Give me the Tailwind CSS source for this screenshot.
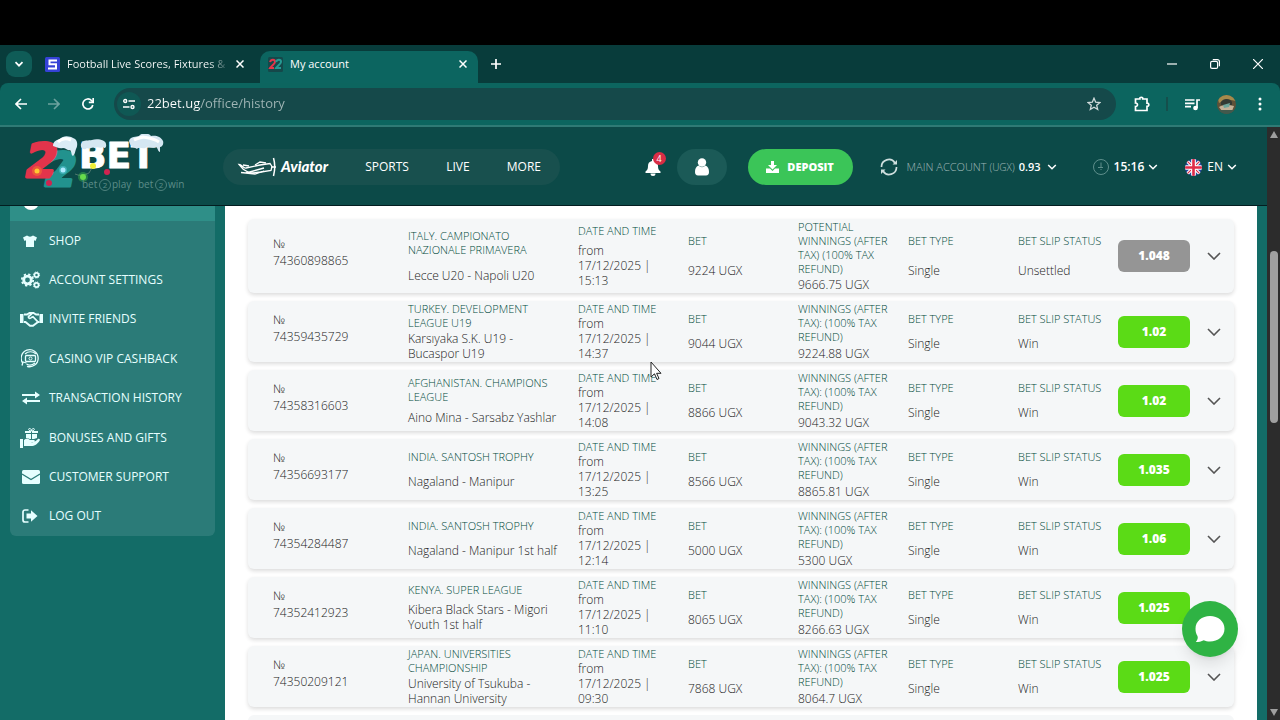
<!DOCTYPE html>
<html lang="en">
<head>
  <meta charset="UTF-8">
  <meta name="viewport" content="width=device-width, initial-scale=1.0">
  <title>My account</title>
  <script src="https://cdn.jsdelivr.net/npm/@tailwindcss/browser@4"></script>
</head>
<body class="h-screen overflow-hidden flex flex-col bg-black font-['Open_Sans','Noto_Sans',sans-serif] text-white">

  <!-- tab strip -->
  <div class="mt-[45px] h-[38px] shrink-0 bg-[#083c3b] flex items-end">
    <button aria-label="Search tabs" class="ml-1.5 mb-1.5 size-[26px] rounded-[9px] bg-[#0f5c57] flex items-center justify-center">
      <svg class="size-2.5" viewBox="0 0 10 10" fill="none" stroke="currentColor" stroke-width="1.7"><path d="M1.5 3.2 5 6.7l3.500-3.500"/></svg>
    </button>
    <div class="h-8 w-[228px] pl-[13px] pr-[16px] pb-1.5 flex items-center text-[11px] font-medium">
      <svg class="size-[15px] shrink-0" viewBox="0 0 15 15"><rect width="15" height="15" rx="1.500" fill="#3542d6"/><path d="M12 3.500H4.500v3.800H11v4.200H3" fill="none" stroke="#fff" stroke-width="2"/></svg>
      <span class="ml-[7px] whitespace-nowrap bg-linear-to-r from-white from-90% to-white/20 bg-clip-text text-transparent">Football Live Scores, Fixtures &amp;</span>
      <button aria-label="Close tab" class="ml-auto"><svg class="size-2" viewBox="0 0 8 8" stroke="currentColor" stroke-width="1.500"><path d="m.5.5 7 7m0-7-7 7"/></svg></button>
    </div>
    <div class="h-8 w-[218px] pl-2 pr-[11px] pb-1.5 rounded-t-[10px] bg-[#0c6560] flex items-center text-[11px] font-medium">
      <svg class="size-[15px] shrink-0" viewBox="0 0 15 15"><rect width="15" height="15" rx="1.500" fill="#15484a"/><path d="M2 5c1-3 5-3 5 0 0 2-4 4-5 6h4" fill="none" stroke="#e5354a" stroke-width="2"/><path d="M8 5c1-3 5-3 5 0 0 2-4 4-5 6h5" fill="none" stroke="#269a93" stroke-width="2"/></svg>
      <span class="ml-[7px]">My account</span>
      <button aria-label="Close tab" class="ml-auto"><svg class="size-2" viewBox="0 0 8 8" stroke="currentColor" stroke-width="1.500"><path d="m.5.5 7 7m0-7-7 7"/></svg></button>
    </div>
    <button aria-label="New tab" class="ml-[13px] mb-[14px]"><svg class="size-2.5" viewBox="0 0 10 10" stroke="currentColor" stroke-width="1.700"><path d="M5 0v10M0 5h10"/></svg></button>
    <div class="ml-auto mr-[17px] mb-3.5 flex items-center gap-[33px]">
      <button aria-label="Minimize"><svg class="size-2.5" viewBox="0 0 10 10" stroke="currentColor" stroke-width="1.200"><path d="M0 5h10"/></svg></button>
      <button aria-label="Restore"><svg class="size-2.5" viewBox="0 0 10 10" fill="none" stroke="currentColor" stroke-width="1.200"><rect x=".6" y="2.400" width="7" height="7" rx="1.500"/><path d="M2.800.6h4.600a2 2 0 0 1 2 2v4.600"/></svg></button>
      <button aria-label="Close"><svg class="size-2.5" viewBox="0 0 10 10" stroke="currentColor" stroke-width="1.200"><path d="m0 0 10 10M10 0 0 10"/></svg></button>
    </div>
  </div>

  <!-- toolbar -->
  <div class="shrink-0 bg-[#083c3b]">
    <div class="h-11 bg-[#0c655f] border-b-2 border-[#2f7a75] rounded-t-lg flex items-center pl-[15px] pr-[18px]">
      <button aria-label="Back"><svg class="size-3" viewBox="0 0 12 12" fill="none" stroke="currentColor" stroke-width="1.600"><path d="M12 6H1.200M6 1 1 6l5 5"/></svg></button>
      <button aria-label="Forward" class="ml-[21px] text-white/40"><svg class="size-3" viewBox="0 0 12 12" fill="none" stroke="currentColor" stroke-width="1.600"><path d="M0 6h10.800M6 1l5 5-5 5"/></svg></button>
      <button aria-label="Reload" class="ml-[22px]"><svg class="size-3" viewBox="0 0 12 12" fill="none" stroke="currentColor" stroke-width="1.700"><path d="M10.800 7A5 5 0 1 1 9.500 2.500L11 4"/><path d="M11.200 0v4.400H6.800"/></svg></button>
      <div class="ml-5 h-8 flex-1 rounded-full bg-[#15494a] flex items-center pl-[3px] pr-[15px]">
        <button aria-label="Site information" class="size-6 rounded-full bg-[#0f5854] flex items-center justify-center">
          <svg class="size-3" viewBox="0 0 12 12" fill="none" stroke="currentColor" stroke-width="1.400"><circle cx="2.200" cy="3" r="1.500"/><path d="M5.500 3H12M0 9h6.500"/><circle cx="9.500" cy="9" r="1.500"/></svg>
        </button>
        <input aria-label="Address" value="22bet.ug/office/history" class="ml-1.5 flex-1 min-w-0 text-[13px] text-transparent bg-clip-text bg-linear-to-r from-white from-[53px] to-white/60 to-[53px]">
        <button aria-label="Bookmark" class="text-white/80"><svg class="size-3.5" viewBox="0 0 14 14" fill="none" stroke="currentColor" stroke-width="1.300"><path d="m7 1.200 1.700 4 4.300.3-3.300 2.800 1 4.200L7 10.300l-3.700 2.200 1-4.200L1 5.500l4.300-.3z"/></svg></button>
      </div>
      <button aria-label="Extensions" class="ml-[18px]"><svg class="size-4" viewBox="0 0 16 16" fill="none" stroke="currentColor" stroke-width="1.700"><path d="M1.500 3h4.300c-.4-2.300 3.400-2.300 3 0h4.200v4.200c2.400-.2 2.400 3.300 0 3.100v4.200h-11.500v-4c2.600.1 2.600-3.700 0-3.500z"/></svg></button>
      <span class="ml-4 h-3.5 w-0.5 bg-[#154f4c]"></span>
      <button aria-label="Media" class="ml-[17px]"><svg class="size-[15px]" viewBox="0 0 15 15" fill="none" stroke="currentColor" stroke-width="1.700"><path d="M0 3h9.500M0 6.300h9.500M0 9.600h6"/><path d="M12 11V3h3"/><circle cx="10.500" cy="11" r="1.500" fill="currentColor"/></svg></button>
      <button aria-label="Profile" class="ml-[17px]"><svg class="size-[19px] rounded-full" viewBox="0 0 19 19"><rect width="19" height="19" fill="#5f5138"/><path d="M0 0h19v6L9 4 2 8z" fill="#a58a4c"/><path d="M4 7c2-4 9-4 11 0v3H4z" fill="#343a33"/><path d="M2 12c5-3 10-2 15-1l-2 5c-4 2-7 2-10 0z" fill="#c4b298"/><path d="m6 10 7-2-1 4-5 1z" fill="#6fa69b"/><path d="M2 15h14v4H2z" fill="#42594d"/></svg></button>
      <button aria-label="Menu" class="ml-[22px]"><svg class="w-1 h-3.5" viewBox="0 0 4 14" fill="currentColor"><circle cx="2" cy="2" r="1.500"/><circle cx="2" cy="7" r="1.500"/><circle cx="2" cy="12" r="1.500"/></svg></button>
    </div>
  </div>

  <div class="flex-1 min-h-0 flex">
    <div class="flex-1 min-w-0 flex flex-col bg-[#136c67]">

      <!-- site header -->
      <header class="h-[79px] shrink-0 bg-[#0c4a48] border-b border-[#031d20] flex items-center pt-0.5 pl-[25px] pr-[30px] text-xs">
        <a href="#" aria-label="22bet" class="shrink-0">
          <svg class="w-[165px] h-[66px]" viewBox="0 0 165 66" font-family="Open Sans, sans-serif">
            <g font-family="DejaVu Sans, sans-serif" font-weight="bold" stroke-linejoin="round">
              <text x="20" y="52" font-size="46" font-style="italic" fill="#22928e" stroke="#22928e" stroke-width="3">2</text>
              <text x="1" y="43" font-size="46" font-style="italic" fill="#e2344b" stroke="#e2344b" stroke-width="3">2</text>
              <text x="54" y="34" font-size="36" fill="#fff" stroke="#fff" stroke-width="1">BET</text>
            </g>
            <path d="M20 51 40 24l9-3v8L29 53z" fill="#22928e"/>
            <path d="M28 12c0-5 4-6 7-7 3-4 10-3 13-1 5 1 5 8 3 11-1 3-1 5-3 7-2-1-1-4-3-6-3 1-4-2-7-2-4 1-6-1-10-2z" fill="#dcecf6"/>
            <path d="M33 8c3-3 8-4 13-2" fill="none" stroke="#fff" stroke-width="3"/>
            <path d="M56 10c2-5 8-3 11-4 5-2 14 0 14 4 1 4-2 5-3 3-3 2-5-1-8 1-3-2-5 2-8 0-3 3-7 0-6-4z" fill="#d5e7f2"/>
            <path d="M104 7c1-5 8-4 10-5 3-4 10-3 12 0 4-1 10 0 12 5 1 3-1 6-3 6v5c-2 0-2-4-4-5-4 2-6-1-9 0-4 3-7-1-10 2-3-2-7-2-8-8z" fill="#d5e7f2"/>
            <path d="M109 6c4-2 6-2 9-3 5 1 10 1 16 5" fill="none" stroke="#fff" stroke-width="3"/>
            <path d="M50 40q6 3 14-1l4-7" fill="none" stroke="#4d796e" stroke-width="1"/>
            <g fill-opacity=".35"><circle cx="12" cy="37" r="5" fill="#ff9c1f"/><circle cx="38" cy="36" r="4" fill="#76e4ff"/><circle cx="58" cy="43" r="5" fill="#51dd47"/></g>
            <circle cx="12" cy="37" r="2.500" fill="#ffc832"/><circle cx="24" cy="49" r="3" fill="#cf2450"/><circle cx="38" cy="36" r="2.500" fill="#aeeaff"/><circle cx="58" cy="43" r="3" fill="#67dc4c"/><circle cx="68" cy="32" r="3" fill="#f0ef37"/><circle cx="82" cy="38" r="3" fill="#cf2450"/>
            <g font-size="10" fill="#5d8d89"><text x="57" y="54">bet</text><text x="87" y="54">play</text><text x="113" y="54">bet</text><text x="143" y="54">win</text></g>
            <g fill="none" stroke="#4f827e"><circle cx="80" cy="51" r="5.500"/><circle cx="136" cy="51" r="5.500"/></g>
            <g font-size="8" fill="#5d8d89" text-anchor="middle"><text x="80" y="54">2</text><text x="136" y="54">2</text></g>
          </svg>
        </a>
        <nav class="ml-[33px] h-9 w-[337px] rounded-full bg-[#18504e] flex items-center pl-3.5 pr-[19px] justify-between">
          <a href="#" class="flex items-center">
            <svg class="w-10 h-5" viewBox="0 0 40 20" fill="none" stroke="#fff" stroke-width="1.300"><path d="M2 7.500c3 0 4 4 7 3.500l14-3 10-1.500 2 3-1 4-10 1.500-9 1c-4 0-6-2-9-4z"/><path d="m9 16 18-5M4 15.500l14 1.500 9-3M12 9l-6-1M18 8l5-3 6 1"/><path d="M36.500 1c1.500 5 1.500 12 0 18M34 10h5" stroke-width="1.500"/></svg>
            <span class="ml-1 font-['Lato',sans-serif] font-black italic text-[15px]">Aviator</span>
          </a>
          <a href="#">SPORTS</a>
          <a href="#">LIVE</a>
          <a href="#">MORE</a>
        </nav>
        <div class="ml-auto flex items-center">
          <button aria-label="Notifications" class="relative">
            <svg class="w-4 h-[18px]" viewBox="0 0 16 18" fill="#fff"><path d="M7 1h2v2c3 .5 4 2.500 4 5 0 3 .8 4.200 2.500 5.500V15H.5v-1.500C2.200 12.200 3 11 3 8c0-2.500 1-4.500 4-5zM5.500 15.500h5a2.500 2.500 0 0 1-5 0z"/></svg>
            <span class="absolute left-2 -top-1.5 size-[13px] rounded-full bg-[#d92d45] text-[9px] leading-[13px] text-center">4</span>
          </button>
          <button aria-label="Profile" class="ml-4 w-[50px] h-9 rounded-full bg-[#1b5a57] flex items-center justify-center">
            <svg class="w-3.5 h-[18px]" viewBox="0 0 14 18" fill="#fff"><circle cx="7" cy="4.500" r="4.200"/><path d="M3.500 7.500Q7 11 10.500 7.500C13 8.500 14 11 14 14c0 2-1 3.500-3 3.500H3c-2 0-3-1.500-3-3.500 0-3 1-5.500 3.500-6.500z"/></svg>
          </button>
          <button class="ml-[21px] w-[105px] h-9 rounded-full bg-[#3bc558] flex items-center justify-center gap-2 text-[11px] font-extrabold">
            <svg class="w-[13px] h-3" viewBox="0 0 13 12" fill="#fff"><path d="M5 0h3v4h3L6.500 8.500 2 4h3zM0 7.500h4L6.500 10 9 7.500h4V12H0z"/></svg>
            DEPOSIT
          </button>
          <button aria-label="Refresh balance" class="ml-[27px]"><svg class="size-[18px]" viewBox="0 0 18 18" fill="none" stroke="#cfdfde" stroke-width="1.700"><path d="M1.500 9a7.300 7.300 0 0 1 13.500-4M16.500 9A7.300 7.300 0 0 1 3 13"/><path d="M17 2v4.500h-4.500zM1 16v-4.500h4.500z" fill="#cfdfde" stroke="none"/></svg></button>
          <button class="ml-[9px] flex items-center text-[11px]">
            <span class="font-light text-white/60">MAIN ACCOUNT <span class="text-[10px]">(UGX)</span></span>
            <span class="ml-1 font-semibold">0.93</span>
            <svg class="ml-1.5 size-2.5" viewBox="0 0 10 10" fill="none" stroke="#fff" stroke-width="1.500"><path d="M1.200 3 5 6.800 8.800 3"/></svg>
          </button>
          <button class="ml-9 flex items-center">
            <svg class="size-4" viewBox="0 0 16 16" fill="none" stroke="#5f8f8c"><circle cx="8" cy="8" r="7.500"/><path d="M8 3.500v5M5 8.500h5M8 10v1"/></svg>
            <span class="ml-[5px] font-semibold">15:16</span>
            <svg class="ml-1 size-2.5" viewBox="0 0 10 10" fill="none" stroke="#fff" stroke-width="1.500"><path d="M1.200 3 5 6.800 8.800 3"/></svg>
          </button>
          <button class="ml-[27px] flex items-center">
            <svg class="size-[17px] rounded-full" viewBox="0 0 18 18"><rect width="18" height="18" fill="#26479b"/><path d="m0 0 18 18M18 0 0 18" stroke="#fff" stroke-width="3.500"/><path d="m0 0 18 18M18 0 0 18" stroke="#df2b48" stroke-width="1.200"/><path d="M9 0v18M0 9h18" stroke="#fff" stroke-width="5"/><path d="M9 0v18M0 9h18" stroke="#df2b48" stroke-width="2.800"/></svg>
            <span class="ml-[5px]">EN</span>
            <svg class="ml-1 size-2.5" viewBox="0 0 10 10" fill="none" stroke="#fff" stroke-width="1.500"><path d="M1.200 3 5 6.800 8.800 3"/></svg>
          </button>
        </div>
      </header>

      <div class="flex-1 min-h-0 overflow-hidden flex pl-2.5 pr-2.5">
        <aside class="w-[205px] shrink-0">
          <a href="#" aria-label="Bet history" class="h-[39px] -mt-6 bg-[#2f8f88] flex items-center pl-[13px]"><svg class="size-4" viewBox="0 0 16 16"><circle cx="8" cy="8" r="8" fill="#fff"/></svg></a>
          <ul class="h-[315px] rounded-b-md bg-[#2b7b78] flex flex-col text-xs text-[#e6ffff]">
            <li class="flex-1 flex"><a href="#" class="w-full flex items-center">
              <svg class="ml-[11px] w-[18px] h-3.5 mr-2.5" viewBox="0 0 18 14" fill="currentColor"><path d="M6 1.500c1.500 1.500 4.500 1.500 6 0l4 2L14.500 7 13 6.300V13H5V6.300L3.500 7 2 3.500z"/></svg>SHOP</a></li>
            <li class="flex-1 flex"><a href="#" class="w-full flex items-center">
              <svg class="ml-[11px] w-5 h-[18px] mr-2" viewBox="0 0 20 18" fill="none" stroke="currentColor"><circle cx="6.500" cy="9" r="3.800" stroke-width="2.800"/><circle cx="6.500" cy="9" r="5.700" stroke-width="1.800" stroke-dasharray="2.240 2.240"/><circle cx="15.500" cy="4" r="2.100" stroke-width="1.700"/><circle cx="15.500" cy="4" r="3.100" stroke-width="1" stroke-dasharray="1.220 1.220"/><circle cx="15.500" cy="14" r="2.100" stroke-width="1.700"/><circle cx="15.500" cy="14" r="3.100" stroke-width="1" stroke-dasharray="1.220 1.220"/></svg>ACCOUNT SETTINGS</a></li>
            <li class="flex-1 flex"><a href="#" class="w-full flex items-center">
              <svg class="ml-2.5 w-[23px] h-4 mr-1.5" viewBox="0 0 23 16" fill="none" stroke="currentColor"><path d="M0 3h3.500v9H0zM19.500 3H23v9h-3.500z" fill="currentColor" stroke="none"/><path d="M4 3.500h3L9.500 2h4L16 3.500h3M4 11h1.500l4.500 3.700h3L18 11h1.500" stroke-width="1.900"/><path d="M12 2.500 8.500 5.500c-.5 1.800 1.500 2.500 3 1L13 5.700l4.700 5" stroke-width="1.700"/></svg>INVITE FRIENDS</a></li>
            <li class="flex-1 flex"><a href="#" class="w-full flex items-center">
              <svg class="ml-[11px] size-[19px] mr-[9px]" viewBox="0 0 19 19" fill="none" stroke="currentColor"><path d="M2 14.500A8.500 8.500 0 1 1 6 17.300M1 16.500l1-3.500 3.500 1" stroke-width="1.300"/><rect x="4.500" y="6.500" width="10" height="6" rx="1" stroke-width="1.300"/><circle cx="9.500" cy="9.500" r="1.500"/><path d="M4 5C7 2 12 2 15 5M5.500 15c3 2 6 1 8.500-1" stroke-width="1.200"/></svg>CASINO VIP CASHBACK</a></li>
            <li class="flex-1 flex"><a href="#" class="w-full flex items-center">
              <svg class="ml-3 w-[18px] h-3.5 mr-[9px]" viewBox="0 0 18 14" fill="currentColor"><path d="M0 3h13V.5L18 4l-5 3.500V5H0zM18 9H5V6.500L0 10l5 3.500V11h13z"/></svg>TRANSACTION HISTORY</a></li>
            <li class="flex-1 flex"><a href="#" class="w-full flex items-center">
              <svg class="ml-2.5 w-[21px] h-5 mr-2" viewBox="0 0 21 20" fill="currentColor"><path d="M0 11h3v9H0zM4 12c2-2 4-2 6 0h4c1 0 1 1.800 0 2h-3c2 .8 4 0 7-3 1-.7 2.500.3 1.700 1.500C17 16.500 15 18 11 18H4zM6 6h5v5H9.500C8.500 10 7 10 6 10zM12 6h5v4l-3 1h-2zM5 3h6v2H5zM12 3h6v2h-6z"/><path d="M11.500 3C8 3 8 0 10 .5c1 .3 1.500 1.500 1.500 2.500 0-1 .5-2.200 1.500-2.500 2-.5 2 2.500-1.500 2.500z" fill="none" stroke="currentColor"/></svg>BONUSES AND GIFTS</a></li>
            <li class="flex-1 flex"><a href="#" class="w-full flex items-center">
              <svg class="ml-3 w-[18px] h-3.5 mr-[9px]" viewBox="0 0 18 14"><rect width="18" height="14" rx="1.500" fill="currentColor"/><path d="m0 4 9 5.500L18 4" fill="none" stroke="#2b7b78" stroke-width="1.200"/></svg>CUSTOMER SUPPORT</a></li>
            <li class="flex-1 flex"><a href="#" class="w-full flex items-center">
              <svg class="ml-3 w-4 h-3.5 mr-[11px]" viewBox="0 0 16 14" fill="currentColor"><path d="M6.500 1H3a2 2 0 0 0-2 2v8a2 2 0 0 0 2 2h3.500" fill="none" stroke="currentColor" stroke-width="1.700"/><path d="M4.500 4.500H9V1.200L15.500 7 9 12.800V9.500H4.500z"/></svg>LOG OUT</a></li>
          </ul>
        </aside>

        <main class="ml-2.5 flex-1 min-w-0 bg-white pl-[23px] pr-[23px] pt-[13px]">
          <div id="bets" class="flex flex-col gap-2"></div>
        </main>
      </div>
    </div>

    <!-- scrollbar -->
    <div class="w-[13px] shrink-0 bg-[#2c2c2c] flex flex-col items-center pt-1 pb-1">
      <svg class="w-2 h-2" viewBox="0 0 8 8" fill="#9f9f9f"><path d="M4 0 8 7H0z"/></svg>
      <div class="mt-28 h-[172px] w-2 rounded-full bg-[#9f9f9f]"></div>
      <svg class="mt-auto w-2 h-2" viewBox="0 0 8 8" fill="#9f9f9f"><path d="M4 8 8 1H0z"/></svg>
    </div>
  </div>

  <button aria-label="Chat" class="fixed right-[42px] bottom-[63px] size-14 rounded-full bg-[#2fb344] shadow-lg flex items-center justify-center">
    <svg class="w-[30px] h-[27px]" viewBox="0 0 30 27" fill="#fff"><path d="M15 0c8 0 14.500 5.200 14.500 12.700S23 25.500 15 25.500c-2.500 0-4.500-.4-6.300-1.200C6.500 25.700 3.500 26 .8 26c1.700-2 2.400-3.700 1.700-6C1.200 18 .5 15.700.5 12.700.5 5.200 7 0 15 0z"/></svg>
  </button>

  <svg class="fixed left-[650px] top-[361px] w-3 h-5" viewBox="0 0 12 20"><path d="M1 1v15l3.500-3.200L7 18.500l2-1-2.400-5.200H11z" fill="#fff" stroke="#222"/></svg>

  <script>
    const won = 'WINNINGS (AFTER TAX): (100% TAX REFUND)';
    const bets = [
      { id: '74360898865', league: 'ITALY. CAMPIONATO NAZIONALE PRIMAVERA', match: 'Lecce U20 - Napoli U20', time: '15:13', bet: '9224', label: 'POTENTIAL WINNINGS (AFTER TAX) (100% TAX REFUND)', win: '9666.75', status: 'Unsettled', odds: '1.048' },
      { id: '74359435729', league: 'TURKEY. DEVELOPMENT LEAGUE U19', match: 'Karsıyaka S.K. U19 - Bucaspor U19', time: '14:37', bet: '9044', label: won, win: '9224.88', status: 'Win', odds: '1.02' },
      { id: '74358316603', league: 'AFGHANISTAN. CHAMPIONS LEAGUE', match: 'Aino Mina - Sarsabz Yashlar', time: '14:08', bet: '8866', label: won, win: '9043.32', status: 'Win', odds: '1.02' },
      { id: '74356693177', league: 'INDIA. SANTOSH TROPHY', match: 'Nagaland - Manipur', time: '13:25', bet: '8566', label: won, win: '8865.81', status: 'Win', odds: '1.035' },
      { id: '74354284487', league: 'INDIA. SANTOSH TROPHY', match: 'Nagaland - Manipur 1st half', time: '12:14', bet: '5000', label: won, win: '5300', status: 'Win', odds: '1.06' },
      { id: '74352412923', league: 'KENYA. SUPER LEAGUE', match: 'Kibera Black Stars - Migori Youth 1st half', time: '11:10', bet: '8065', label: won, win: '8266.63', status: 'Win', odds: '1.025' },
      { id: '74350209121', league: 'JAPAN. UNIVERSITIES CHAMPIONSHIP', match: 'University of Tsukuba - Hannan University', time: '09:30', bet: '7868', label: won, win: '8064.7', status: 'Win', odds: '1.025' }
    ];

    function cell(label, value, extra = '') {
      return `
        <div class="flex flex-col justify-evenly ${extra}">
          <div class="text-[11px] leading-[14px] text-[#00493b]">${label}</div>
          <div>${value}</div>
        </div>`;
    }

    document.getElementById('bets').innerHTML = bets.map(b => {
      const open = b.status === 'Unsettled';
      return `
        <div class="${open ? 'h-[74px]' : 'h-[61px]'} shrink-0 grid grid-cols-[135fr_170fr_110fr_110fr_110fr_110fr_100fr_72px_44px] pl-[25px] rounded-md bg-[#f5f7f8] shadow-[0_2px_4px_rgba(0,0,0,0.14)] text-xs leading-[15px] font-light text-[#222]">
          <div class="flex flex-col justify-center gap-0.5 pb-2"><div>№</div><div>${b.id}</div></div>
          ${cell(b.league, b.match, 'pr-4')}
          ${cell('DATE AND TIME', `from<br>17/12/2025 | ${b.time}`, 'pr-6')}
          ${cell('BET', b.bet + ' UGX')}
          ${cell(b.label, b.win + ' UGX', 'pr-4')}
          ${cell('BET TYPE', 'Single')}
          ${cell('BET SLIP STATUS', b.status)}
          <div class="self-center h-8 rounded-md ${open ? 'bg-[#959595]' : 'bg-[#5bdb16]'} text-white font-extrabold text-xs flex items-center justify-center">${b.odds}</div>
          <button aria-label="Show bet ${b.id}" class="pl-[3px] flex items-center justify-center"><svg class="w-3.5 h-2" viewBox="0 0 14 8" fill="none" stroke="#555" stroke-width="1.600"><path d="m1 1 6 6 6-6"/></svg></button>
        </div>`;
    }).join('') + '<div class="h-[61px] shrink-0 rounded-md bg-[#f5f7f8]"></div>';
  </script>
</body>
</html>
